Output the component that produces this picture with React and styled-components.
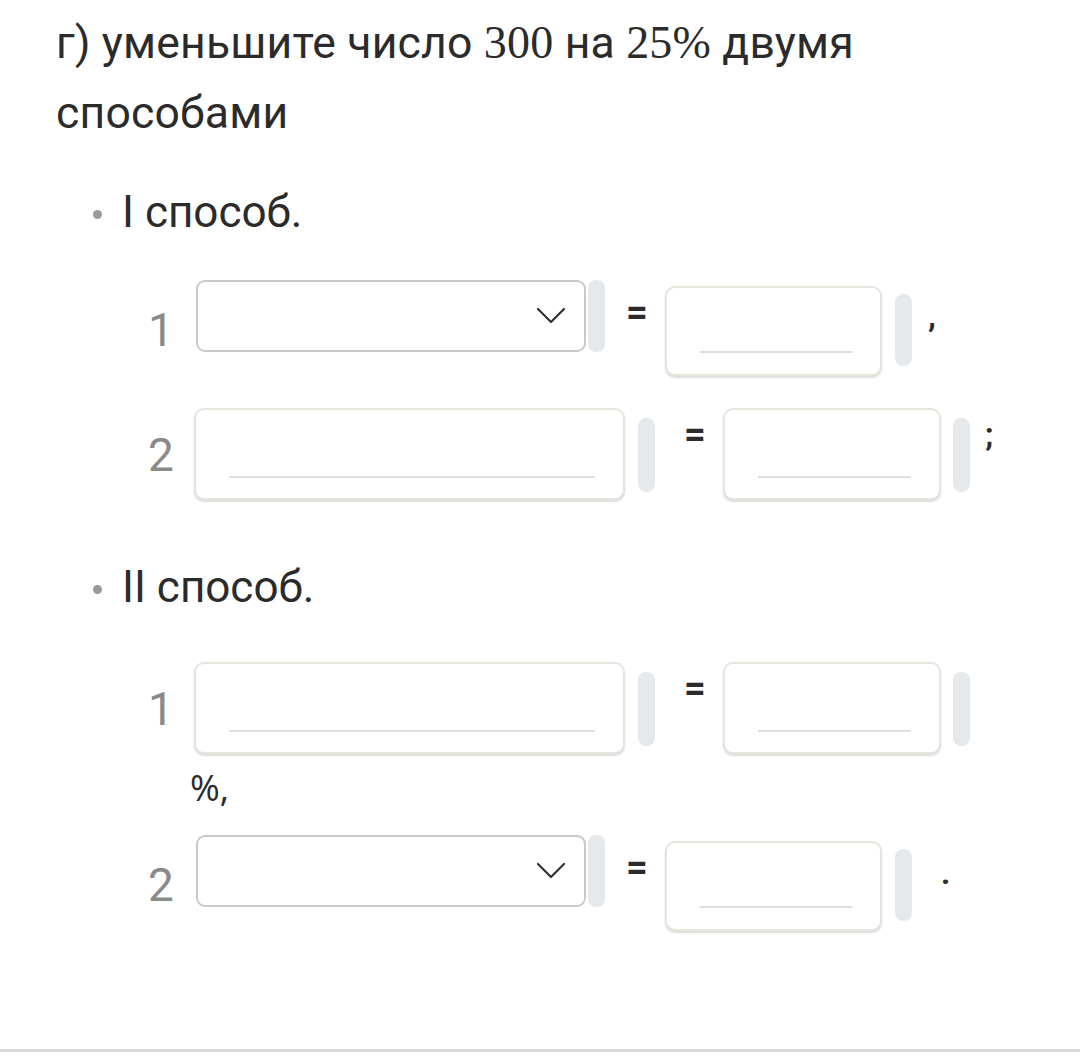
import styled, {createGlobalStyle} from 'styled-components'

const GlobalStyle = createGlobalStyle`
  html, body {
    margin: 0;
    padding: 0;
    background: #ffffff;
  }
  body {
    font-family: Roboto, 'Noto Sans', sans-serif;
    color: #2b2b2b;
  }
`

const Page = styled.div`
  position: relative;
  width: 1080px;
  height: 1062px;
  padding: 8px 0 0 56px;
  box-sizing: border-box;
  overflow: hidden;
`

const Title = styled.div`
  font-size: 44.5px;
  line-height: 70px;
  color: #2b2b2b;
  width: 900px;
  letter-spacing: 0.2px;
`

const MathNum = styled.span`
  font-family: 'Liberation Serif', 'DejaVu Serif', serif;
  font-size: 46px;
  line-height: 1;
`

const Bullet = styled.div`
  display: flex;
  align-items: center;
  margin-top: ${({top}) => top}px;
  margin-left: 37px;
  font-size: 44px;
  line-height: 56px;
  color: #2b2b2b;

  &::before {
    content: '';
    width: 9px;
    height: 9px;
    border-radius: 50%;
    background: #9a9a9a;
    margin-right: 20px;
    margin-top: 4px;
  }
`

const Row = styled.div`
  display: flex;
  align-items: flex-start;
  margin-top: ${({top}) => top}px;
  margin-left: 92px;
`

const Num = styled.span`
  width: 24px;
  font-size: 46px;
  line-height: 46px;
  color: #8a8a8a;
  margin-top: ${({top}) => top}px;
`

const Select = styled.div`
  box-sizing: border-box;
  width: 390px;
  height: 72px;
  margin-left: 24px;
  border: 2px solid #c9c9c9;
  border-radius: 9px;
  display: flex;
  align-items: center;
  justify-content: flex-end;
  padding-right: 18px;
  color: #333;
`

const Pill = styled.div`
  width: 17px;
  height: ${({h}) => h}px;
  margin-left: ${({left}) => left}px;
  margin-top: ${({top}) => top || 0}px;
  border-radius: 8px;
  background: #e6e9ec;
  flex-shrink: 0;
`

const Eq = styled.span`
  margin-left: ${({left}) => left}px;
  margin-top: ${({top}) => top}px;
  width: 20px;
  font-size: 38px;
  font-weight: 700;
  line-height: 30px;
  color: #2b2b2b;
`

const Field = styled.div`
  box-sizing: border-box;
  width: ${({w}) => w}px;
  height: ${({h}) => h}px;
  margin-left: ${({left}) => left}px;
  margin-top: ${({top}) => top || 0}px;
  border: 2px solid #e2e6dc;
  border-radius: 10px;
  box-shadow: 0 2px 2px rgba(0, 0, 0, 0.14);
  background: #fff;
  display: flex;
  align-items: flex-end;
  padding: 0 28px ${({under}) => under}px 33px;
  flex-shrink: 0;
`

const Underline = styled.div`
  flex: 1;
  height: 2px;
  background: #dedede;
`

const Punct = styled.span`
  margin-left: ${({left}) => left}px;
  margin-top: ${({top}) => top}px;
  font-size: 32px;
  font-weight: 700;
  line-height: 32px;
  color: #2b2b2b;
`

const Suffix = styled.div`
  margin: 14px 0 0 134px;
  font-family: 'Open Sans', Roboto, sans-serif;
  font-size: 36px;
  line-height: 40px;
  color: #2b2b2b;
`

const BottomLine = styled.div`
  position: absolute;
  left: 0;
  right: 0;
  top: 1049px;
  height: 3px;
  background: #d9d9d9;
`

const Chevron = () => (
  <svg width="30" height="18" viewBox="0 0 30 18" fill="none">
    <path d="M2 2 L15 15 L28 2" stroke="#333" strokeWidth="2.2" strokeLinecap="round" strokeLinejoin="round" />
  </svg>
)

const SelectRow = ({n, top, punct, punctLeft, punctTop}) => (
  <Row top={top}>
    <Num top={27}>{n}</Num>
    <Select>
      <Chevron />
    </Select>
    <Pill h={72} left={2} />
    <Eq left={21} top={17}>=</Eq>
    <Field w={217} h={90} left={19} top={6} under={21}>
      <Underline />
    </Field>
    <Pill h={72} left={13} top={14} />
    <Punct left={punctLeft} top={punctTop}>{punct}</Punct>
  </Row>
)

const InputRow = ({n, top, punct}) => (
  <Row top={top}>
    <Num top={24}>{n}</Num>
    <Field w={431} h={92} left={22} under={20}>
      <Underline />
    </Field>
    <Pill h={74} left={13} top={10} />
    <Eq left={29} top={11}>=</Eq>
    <Field w={218} h={92} left={19} under={20}>
      <Underline />
    </Field>
    <Pill h={74} left={12} top={10} />
    {punct && <Punct left={15} top={10}>{punct}</Punct>}
  </Row>
)

const App = () => (
  <>
    <GlobalStyle />
    <Page>
      <Title>
        г) уменьшите число <MathNum>300</MathNum> на <MathNum>25%</MathNum> двумя способами
      </Title>
      <Bullet top={36}>I способ.</Bullet>
      <SelectRow n="1" top={40} punct="," punctLeft={16} punctTop={20} />
      <InputRow n="2" top={32} punct=";" />
      <Bullet top={59}>II способ.</Bullet>
      <InputRow n="1" top={47} />
      <Suffix>%,</Suffix>
      <SelectRow n="2" top={27} punct="." punctLeft={29} punctTop={22} />
      <BottomLine />
    </Page>
  </>
)

export default App
